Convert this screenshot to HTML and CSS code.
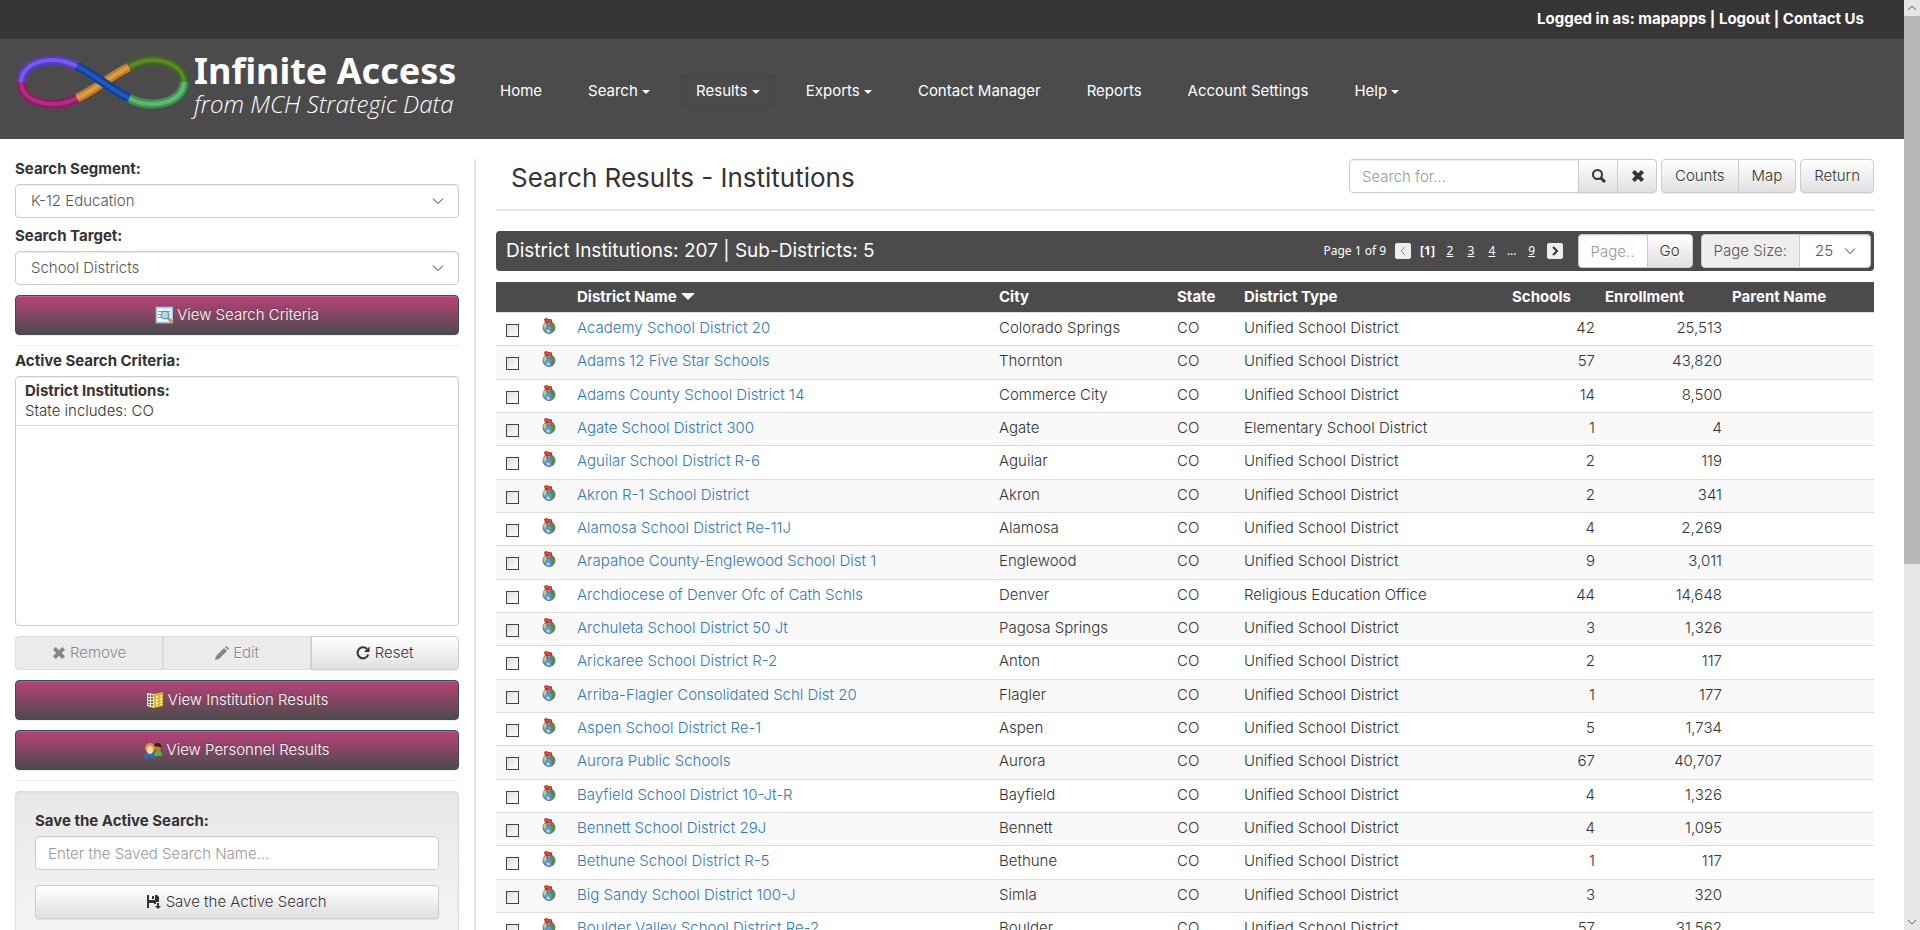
FILE: index.html
```html
<!DOCTYPE html>
<html lang="en">
<head>
    <meta charset="UTF-8">
    <meta name="viewport" content="width=device-width, initial-scale=1.0">
    <title>Infinite Access - Search Results</title>
    <link rel="stylesheet" href="styles.css">
</head>
<body>
    <!-- shared icons -->
    <svg class="sprite" aria-hidden="true">
        <symbol id="icon-globe" viewBox="0 0 16 16">
            <circle cx="8" cy="9.500" r="6" fill="#5b95d2" stroke="#5c6f6a" stroke-width="1"/>
            <path d="M2.500 7 L5 4.500 L7.500 5 L7 7 L5 9 L4 11 L2.500 10 Z" fill="#b4cc8e"/>
            <path d="M9 6 L12 5.500 L14 9 L12.500 13 L11 14 L10 12 L11 10 L9 8.500 Z" fill="#5f8c2f"/>
            <path d="M5 12 L8 11.500 L9 14 L7 15 Z" fill="#b9d6f2"/>
            <path d="M5.500 3 L6.500 8" stroke="#7b3028"/>
            <path d="M3 1 L5 0 L8 1 L11 1.500 L11 5.500 L7.500 4.500 L4 5 Z" fill="#d62b20"/>
            <path d="M5 1.500 L6.500 3 M8 2.500 L9.500 4" stroke="#f0958c"/>
        </symbol>
        <symbol id="icon-remove" viewBox="0 0 14 14">
            <path d="M3.800 1 L7 4.200 L10.200 1 L13 3.800 L9.800 7 L13 10.200 L10.200 13 L7 9.800 L3.800 13 L1 10.200 L4.200 7 L1 3.800 Z" fill="currentColor"/>
        </symbol>
        <symbol id="icon-down" viewBox="0 0 12 8">
            <path d="M1 1.500 L6 6.500 L11 1.500" fill="none" stroke="currentColor"/>
        </symbol>
    </svg>

    <div class="page">
        <div class="topbar">
            <span>Logged in as: mapapps | <a href="#">Logout</a> | <a href="#">Contact Us</a></span>
        </div>

        <header class="header">
            <a href="#" class="logo">
                <svg class="logo-mark" viewBox="0 0 174 54" aria-hidden="true">
                    <g fill="none" stroke-width="9">
                        <path d="M5 27 C5 42 21 49 38 49 C47 49 54 47 61 43" stroke="#8c1d60"/>
                        <path d="M61 43 C77 36 96 20 113 12" stroke="#c17d2b"/>
                        <path d="M113 12 C120 8 127 5 136 5 C153 5 168 14 168 27" stroke="#41691b"/>
                        <path d="M5 27 C5 12 21 5 38 5 C47 5 54 8 61 11" stroke="#573bc5"/>
                        <path d="M113 43 C120 47 127 49 136 49 C153 49 168 41 168 27" stroke="#409150"/>
                    </g>
                    <g fill="none" stroke-width="4">
                        <path d="M5 27 C5 42 21 49 38 49 C47 49 54 47 61 43" stroke="#b62b81"/>
                        <path d="M61 43 C77 36 96 20 113 12" stroke="#df9d42"/>
                        <path d="M113 12 C120 8 127 5 136 5 C153 5 168 14 168 27" stroke="#5c8928"/>
                        <path d="M5 27 C5 12 21 5 38 5 C47 5 54 8 61 11" stroke="#785bed"/>
                        <path d="M113 43 C120 47 127 49 136 49 C153 49 168 41 168 27" stroke="#5bb971"/>
                    </g>
                    <path d="M61 11 C77 19 96 35 113 43" fill="none" stroke="#12409a" stroke-width="9"/>
                    <path d="M61 11 C77 19 96 35 113 43" fill="none" stroke="#2059be" stroke-width="4"/>
                </svg>
                <span class="logo-text">
                    <span class="logo-name">Infinite Access</span>
                    <span class="logo-sub">from MCH Strategic Data</span>
                </span>
            </a>
            <nav class="nav">
                <a href="#">Home</a>
                <a href="#">Search <span class="caret"></span></a>
                <a href="#" class="active">Results <span class="caret"></span></a>
                <a href="#">Exports <span class="caret"></span></a>
                <a href="#">Contact Manager</a>
                <a href="#">Reports</a>
                <a href="#">Account Settings</a>
                <a href="#">Help <span class="caret"></span></a>
            </nav>
        </header>

        <div class="content">
            <aside class="sidebar">
                <label for="segment">Search Segment:</label>
                <div class="select-wrap">
                    <select id="segment" class="form-control"><option>K-12 Education</option></select>
                    <svg class="chevron"><use href="#icon-down"/></svg>
                </div>
                <label for="target">Search Target:</label>
                <div class="select-wrap">
                    <select id="target" class="form-control"><option>School Districts</option></select>
                    <svg class="chevron"><use href="#icon-down"/></svg>
                </div>
                <button type="button" class="btn btn-primary">
                    <svg class="btn-icon" viewBox="0 0 18 18" aria-hidden="true">
                        <rect x="1" y="1" width="17" height="16" fill="#d4e5f7" stroke="#7ba6d6"/>
                        <rect x="3" y="3" width="13" height="12" fill="#f8fbfe"/>
                        <path d="M3 5.500 H15 M3 8.500 H6 M3 11.500 H6 M13 8.500 H15" stroke="#8b98a8"/>
                        <circle cx="10" cy="9" r="4" fill="#a9dcf0" stroke="#5a87b0"/>
                        <path d="M13 12 L17 16" stroke="#e08a35" stroke-width="3"/>
                    </svg>
                    View Search Criteria
                </button>
                <hr>
                <h2 class="side-title">Active Search Criteria:</h2>
                <div class="criteria">
                    <div class="criteria-item">
                        <strong>District Institutions:</strong>
                        <span>State includes: CO</span>
                    </div>
                </div>
                <div class="btn-group">
                    <button type="button" class="btn" disabled><svg class="glyph"><use href="#icon-remove"/></svg> Remove</button>
                    <button type="button" class="btn" disabled>
                        <svg class="glyph" viewBox="0 0 14 14" aria-hidden="true">
                            <path d="M0 14 L1 10 L9 2 L12 5 L4 13 Z M10 1 L11 0 Q12 0 14 2.500 Q14 3 13 4 Z" fill="currentColor"/>
                        </svg> Edit
                    </button>
                    <button type="button" class="btn">
                        <svg class="glyph" viewBox="0 0 14 14" aria-hidden="true">
                            <path d="M11 3 A5.500 5.500 0 1 0 12.300 8.500" fill="none" stroke="currentColor" stroke-width="2"/>
                            <path d="M13.500 0.500 V6 H8 Z" fill="currentColor"/>
                        </svg> Reset
                    </button>
                </div>
                <button type="button" class="btn btn-primary">
                    <svg class="btn-icon" viewBox="0 0 18 18" aria-hidden="true">
                        <path d="M1 2 L8 3 V17 L1 15 Z" fill="#e9e4c0"/>
                        <path d="M8 3 L17 1 V15 L8 17 Z" fill="#d9b63a"/>
                        <path d="M3 4 V14 M6 4 V15" stroke="#6d7458" stroke-width="2" stroke-dasharray="2 1"/>
                        <path d="M11 5 V15 M15 4 V14" stroke="#f4e9a0" stroke-width="2" stroke-dasharray="2 1"/>
                    </svg>
                    View Institution Results
                </button>
                <button type="button" class="btn btn-primary">
                    <svg class="btn-icon" viewBox="0 0 18 18" aria-hidden="true">
                        <path d="M10 15 Q10 9 14 9 Q18 9 18 15 Z" fill="#4dbb3c"/>
                        <circle cx="14" cy="7" r="3" fill="#b9763f"/>
                        <path d="M10 6 Q10 2 14 2 Q18 3 17 7 Q14 4 10 6 Z" fill="#22201d"/>
                        <circle cx="6" cy="7" r="5" fill="#e09a22"/>
                        <path d="M0 17 Q0 11 5 11 Q11 11 11 17 Z" fill="#1f6fd0"/>
                        <ellipse cx="6" cy="9" rx="3" ry="4" fill="#f9d7ac"/>
                    </svg>
                    View Personnel Results
                </button>
                <hr>
                <div class="well">
                    <label for="savedName">Save the Active Search:</label>
                    <input type="text" id="savedName" class="form-control" placeholder="Enter the Saved Search Name...">
                    <button type="button" class="btn">
                        <svg class="glyph" viewBox="0 0 14 14" aria-hidden="true">
                            <path d="M0 0 H2 V5 H8 V0 H10 L12 2 V7 H9 V9 H7 V8 H2 V13 H0 Z M5 1 H7 V4 H5 Z" fill="currentColor"/>
                            <path d="M10 8 H12 V11 H14 L11 14 L8 11 H10 Z" fill="currentColor"/>
                        </svg> Save the Active Search
                    </button>
                </div>
            </aside>

            <main class="main">
                <div class="page-head">
                    <h1>Search Results - Institutions</h1>
                    <div class="tools">
                        <div class="input-group search">
                            <input type="text" class="form-control" placeholder="Search for..." aria-label="Search for">
                            <button type="button" class="btn" aria-label="Search">
                                <svg class="glyph" viewBox="0 0 14 14" aria-hidden="true">
                                    <circle cx="5.500" cy="5.500" r="4.500" fill="none" stroke="currentColor" stroke-width="2"/>
                                    <path d="M8.500 8.500 L13 13" stroke="currentColor" stroke-width="3"/>
                                </svg>
                            </button>
                            <button type="button" class="btn" aria-label="Clear"><svg class="glyph"><use href="#icon-remove"/></svg></button>
                        </div>
                        <div class="input-group">
                            <button type="button" class="btn">Counts</button>
                            <button type="button" class="btn">Map</button>
                        </div>
                        <button type="button" class="btn">Return</button>
                    </div>
                </div>

                <div class="results-bar">
                    <h2>District Institutions: 207 | Sub-Districts: 5</h2>
                    <div class="pager">
                        <span>Page 1 of 9</span>
                        <button type="button" class="pager-btn" aria-label="Previous" disabled>
                            <svg viewBox="0 0 8 10"><path d="M6 1 L2 5 L6 9" fill="none" stroke="currentColor"/></svg>
                        </button>
                        <strong>[1]</strong>
                        <a href="#">2</a>
                        <a href="#">3</a>
                        <a href="#">4</a>
                        <span>...</span>
                        <a href="#">9</a>
                        <button type="button" class="pager-btn" aria-label="Next">
                            <svg viewBox="0 0 8 10"><path d="M2 1 L6 5 L2 9" fill="none" stroke="currentColor" stroke-width="2"/></svg>
                        </button>
                    </div>
                    <div class="input-group goto">
                        <input type="text" class="form-control" placeholder="Page.." aria-label="Page">
                        <button type="button" class="btn">Go</button>
                    </div>
                    <div class="input-group page-size">
                        <label for="pageSize">Page Size:</label>
                        <div class="select-wrap">
                            <select id="pageSize" class="form-control"><option>25</option></select>
                            <svg class="chevron"><use href="#icon-down"/></svg>
                        </div>
                    </div>
                </div>

                <table class="results">
                    <colgroup>
                        <col class="col-check"><col class="col-map"><col class="col-name"><col class="col-city"><col class="col-state"><col class="col-type"><col class="col-schools"><col class="col-enroll"><col>
                    </colgroup>
                    <thead>
                        <tr>
                            <th></th>
                            <th></th>
                            <th>District Name <span class="sort"></span></th>
                            <th>City</th>
                            <th>State</th>
                            <th>District Type</th>
                            <th>Schools</th>
                            <th>Enrollment</th>
                            <th>Parent Name</th>
                        </tr>
                    </thead>
                    <tbody id="rows"></tbody>
                </table>
            </main>
        </div>
    </div>

    <div class="scrollbar" aria-hidden="true">
        <svg viewBox="0 0 16 16"><path d="M4 10 L8 6 L12 10" fill="none" stroke="#606060"/></svg>
        <div class="track"><div class="thumb"></div></div>
        <svg viewBox="0 0 16 16"><path d="M4 6 L8 10 L12 6" fill="none" stroke="#606060"/></svg>
    </div>

    <script src="script.js"></script>
</body>
</html>
```
FILE: styles.css
```css
* {
    box-sizing: border-box;
}

body {
    display: flex;
    height: 100vh;
    margin: 0;
    overflow: hidden;
    font-family: Inter, "Open Sans", sans-serif;
    font-size: 15px;
    font-weight: 300;
    line-height: 20px;
    color: #333;
    background: #fff;
}

button,
input,
select {
    font: inherit;
    color: inherit;
}

h1,
h2 {
    margin: 0;
    font-weight: 400;
}

.sprite {
    position: absolute;
    width: 0;
    height: 0;
}

.page {
    flex: 1;
    min-width: 0;
}

/* header */
.topbar {
    display: flex;
    justify-content: flex-end;
    height: 39px;
    padding: 9px 40px;
    background: #363636;
    color: #fff;
    font-weight: 700;
}

.topbar a {
    color: #fff;
    text-decoration: none;
}

.header {
    display: flex;
    align-items: flex-start;
    height: 100px;
    background: #4b4b4b;
}

.logo {
    display: flex;
    gap: 4px;
    padding: 14px 0 0 16px;
    width: 483px;
    color: #fff;
    text-decoration: none;
}

.logo-mark {
    width: 174px;
    height: 54px;
    margin-top: 2px;
}

.logo-text {
    display: flex;
    flex-direction: column;
    font-family: "Open Sans", sans-serif;
    white-space: nowrap;
}

.logo-name {
    font-family: "Noto Sans", sans-serif;
    font-size: 36px;
    font-weight: 700;
    line-height: 36px;
}

.logo-sub {
    font-size: 24px;
    font-style: italic;
    font-weight: 300;
    line-height: 30px;
}

.nav {
    display: flex;
    gap: 12px;
    padding-top: 35px;
}

.nav a {
    padding: 7px 17px;
    color: #fff;
    font-weight: 400;
    text-decoration: none;
    white-space: nowrap;
}

.nav .active {
    box-shadow: inset 0 3px 9px rgba(0, 0, 0, 0.08);
}

.caret {
    display: inline-block;
    border: 4px solid transparent;
    border-top-color: #fff;
    border-bottom: 0;
    vertical-align: middle;
}

.content {
    display: flex;
    padding-top: 20px;
}

/* sidebar */
.sidebar {
    display: flex;
    flex-direction: column;
    flex: 0 0 25%;
    gap: 10px;
    padding: 0 15px;
    border-right: 2px solid #e5e5e5;
}

.sidebar label,
.side-title {
    margin-bottom: -5px;
    font-size: 15px;
    font-weight: 700;
}

.select-wrap + label {
    margin-top: -2px;
}

.form-control {
    width: 100%;
    height: 34px;
    padding: 6px 12px;
    border: 1px solid #ccc;
    border-radius: 4px;
    background: #fff;
    color: #555;
    box-shadow: inset 0 1px 1px rgba(0, 0, 0, 0.075);
}

.form-control::placeholder {
    color: #999;
    opacity: 1;
}

.select-wrap {
    position: relative;
}

.select-wrap select {
    display: block;
    padding-left: 15px;
    appearance: none;
}

.chevron {
    position: absolute;
    right: 15px;
    top: 13px;
    width: 12px;
    height: 8px;
    color: #333;
    pointer-events: none;
}

.btn {
    height: 34px;
    padding: 6px 12px;
    border: 1px solid #ccc;
    border-radius: 4px;
    background: linear-gradient(#fff, #e0e0e0);
    box-shadow: 0 1px 1px rgba(0, 0, 0, 0.075);
    color: #333;
    text-shadow: 0 1px 0 #fff;
    white-space: nowrap;
}

.btn:disabled {
    border-color: #dbdbdb;
    background: #ebebeb;
    box-shadow: none;
    color: #858585;
}

.btn-primary {
    height: 40px;
    border-color: #3e4c58;
    background: linear-gradient(#b9427a, #4b4b4b);
    box-shadow: inset 0 1px 0 rgba(255, 255, 255, 0.15), 0 1px 1px rgba(0, 0, 0, 0.075);
    color: #fff;
    text-shadow: 0 -1px 0 rgba(0, 0, 0, 0.2);
}

.btn-icon {
    width: 18px;
    height: 18px;
    vertical-align: -4px;
}

.glyph {
    width: 14px;
    height: 14px;
    vertical-align: -2px;
}

.sidebar hr {
    width: 100%;
    margin: 0;
    border: 0;
    border-top: 1px solid #eee;
}

hr + .side-title {
    margin-top: -5px;
}

.criteria {
    height: 250px;
    border: 1px solid #ccc;
    border-radius: 4px;
    box-shadow: inset 0 1px 1px rgba(0, 0, 0, 0.075);
}

.criteria-item {
    display: flex;
    flex-direction: column;
    padding: 4px 9px;
    border-bottom: 1px solid #ddd;
}

.criteria-item strong {
    font-weight: 700;
}

.btn-group {
    display: flex;
}

.btn-group .btn {
    flex: 1;
    border-radius: 0;
}

.btn-group .btn:first-child {
    border-radius: 4px 0 0 4px;
}

.btn-group .btn:last-child {
    border-radius: 0 4px 4px 0;
}

.well {
    display: flex;
    flex-direction: column;
    padding: 19px;
    border: 1px solid #dcdcdc;
    border-radius: 4px;
    background: linear-gradient(#e8e8e8, #f5f5f5);
    box-shadow: inset 0 1px 3px rgba(0, 0, 0, 0.05);
}

.well label {
    margin-bottom: 5px;
}

.well .btn {
    margin-top: 15px;
}

/* results */
.main {
    flex: 1;
    min-width: 0;
    padding: 0 30px 0 20px;
}

.page-head {
    display: flex;
    justify-content: space-between;
    height: 52px;
    padding-left: 15px;
    border-bottom: 2px solid #e5e5e5;
}

.page-head h1 {
    font-size: 26px;
    line-height: 38px;
}

.tools {
    display: flex;
    gap: 4px;
}

.tools .btn {
    padding: 6px 13px;
}

.input-group {
    display: flex;
}

.input-group > :not(:last-child) {
    border-top-right-radius: 0;
    border-bottom-right-radius: 0;
}

.input-group > :not(:first-child) {
    margin-left: -1px;
    border-top-left-radius: 0;
    border-bottom-left-radius: 0;
}

.search .form-control {
    width: 230px;
}

.search .btn {
    width: 40px;
}

.results-bar {
    display: flex;
    align-items: center;
    height: 40px;
    margin: 20px 0 11px;
    padding: 0 3px 0 10px;
    border-radius: 4px;
    background: #4b4b4b;
    color: #fff;
}

.results-bar h2 {
    flex: 1;
    font-size: 19px;
    font-weight: 400;
}

.pager {
    display: flex;
    align-items: center;
    gap: 9px;
    font-family: "Noto Sans", sans-serif;
    font-size: 12px;
    font-weight: 400;
}

.pager a {
    min-width: 12px;
    color: #fff;
    text-align: center;
}

.pager-btn {
    display: flex;
    align-items: center;
    justify-content: center;
    width: 16px;
    height: 16px;
    padding: 0;
    border: 0;
    border-radius: 2px;
    background: #eee;
    color: #333;
}

.pager-btn:disabled {
    color: #888;
}

.pager-btn svg {
    width: 8px;
    height: 10px;
}

.goto {
    margin: 0 8px 0 15px;
}

.goto .form-control {
    width: 70px;
}

.goto .btn {
    width: 46px;
}

.page-size label {
    padding: 6px 12px;
    border: 1px solid #ccc;
    border-radius: 4px;
    background: #eee;
    color: #555;
}

.page-size .select-wrap {
    width: 72px;
}

.page-size .form-control {
    border-radius: 0 4px 4px 0;
}

.results {
    width: 100%;
    table-layout: fixed;
    border-collapse: collapse;
}

.col-check { width: 40px; }
.col-map { width: 36px; }
.col-name { width: 422px; }
.col-city { width: 178px; }
.col-state { width: 67px; }
.col-type { width: 268px; }
.col-schools { width: 93px; }
.col-enroll { width: 127px; }

.results th {
    height: 30px;
    padding: 0 5px;
    background: #4b4b4b;
    color: #fff;
    font-weight: 700;
    text-align: left;
}

.results td {
    height: 33px;
    padding: 5px;
    border-top: 1px solid #ddd;
    vertical-align: top;
    white-space: nowrap;
}

.results tr:nth-child(3n+2) td {
    height: 34px;
}

.results tbody tr:nth-child(even) {
    background: #f9f9f9;
}

.results .num {
    text-align: right;
}

.results a {
    color: #337ab7;
    text-decoration: none;
}

.results input {
    display: block;
    width: 13px;
    height: 13px;
    margin: 6px 0 0 5px;
    border: 1px solid #444;
    background: linear-gradient(135deg, #ddd, #fff);
    appearance: none;
}

.map-icon {
    display: block;
    width: 16px;
    height: 16px;
}

.sort {
    display: inline-block;
    margin-left: 1px;
    border: 7px solid transparent;
    border-top-color: #fff;
    border-bottom: 0;
    vertical-align: 2px;
}

/* scrollbar */
.scrollbar {
    display: flex;
    flex-direction: column;
    width: 16px;
    background: #e6e6e6;
}

.scrollbar svg {
    width: 16px;
    height: 16px;
}

.track {
    flex: 1;
}

.thumb {
    height: 61%;
    background: #b8b8b8;
}
```
FILE: script.js
```js
var unified = "Unified School District";
var districts = [
    ["Academy School District 20", "Colorado Springs", unified, "42", "25,513"],
    ["Adams 12 Five Star Schools", "Thornton", unified, "57", "43,820"],
    ["Adams County School District 14", "Commerce City", unified, "14", "8,500"],
    ["Agate School District 300", "Agate", "Elementary School District", "1", "4"],
    ["Aguilar School District R-6", "Aguilar", unified, "2", "119"],
    ["Akron R-1 School District", "Akron", unified, "2", "341"],
    ["Alamosa School District Re-11J", "Alamosa", unified, "4", "2,269"],
    ["Arapahoe County-Englewood School Dist 1", "Englewood", unified, "9", "3,011"],
    ["Archdiocese of Denver Ofc of Cath Schls", "Denver", "Religious Education Office", "44", "14,648"],
    ["Archuleta School District 50 Jt", "Pagosa Springs", unified, "3", "1,326"],
    ["Arickaree School District R-2", "Anton", unified, "2", "117"],
    ["Arriba-Flagler Consolidated Schl Dist 20", "Flagler", unified, "1", "177"],
    ["Aspen School District Re-1", "Aspen", unified, "5", "1,734"],
    ["Aurora Public Schools", "Aurora", unified, "67", "40,707"],
    ["Bayfield School District 10-Jt-R", "Bayfield", unified, "4", "1,326"],
    ["Bennett School District 29J", "Bennett", unified, "4", "1,095"],
    ["Bethune School District R-5", "Bethune", unified, "1", "117"],
    ["Big Sandy School District 100-J", "Simla", unified, "3", "320"],
    ["Boulder Valley School District Re-2", "Boulder", unified, "57", "31,562"]
];

document.getElementById("rows").innerHTML = districts.map(function (d) {
    return '<tr>' +
        '<td><input type="checkbox" aria-label="Select ' + d[0] + '"></td>' +
        '<td><svg class="map-icon"><use href="#icon-globe"/></svg></td>' +
        '<td><a href="#">' + d[0] + '</a></td>' +
        '<td>' + d[1] + '</td>' +
        '<td>CO</td>' +
        '<td>' + d[2] + '</td>' +
        '<td class="num">' + d[3] + '</td>' +
        '<td class="num">' + d[4] + '</td>' +
        '<td></td>' +
        '</tr>';
}).join("");
```
